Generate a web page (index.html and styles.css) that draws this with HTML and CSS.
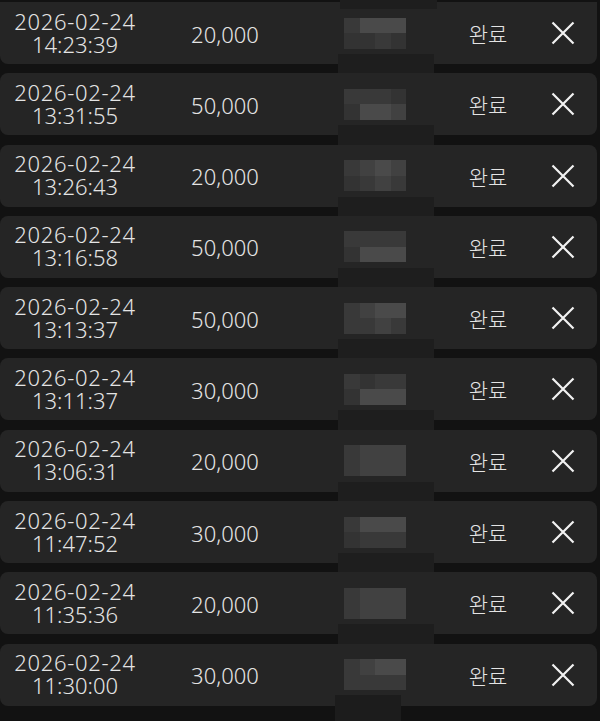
FILE: index.html
```html
<!DOCTYPE html>
<html lang="ko">
<head>
<meta charset="utf-8">
<link rel="stylesheet" href="styles.css">
</head>
<body>
<div class="list">
  <div class="row first">
    <div class="date"><span class="d">2026-02-24</span><span>14:23:39</span></div>
    <div class="amount">20,000</div>
    <div class="blur"><div class="mosaic"><i class="c2"></i><i class="c4"></i><i class="c4"></i><i class="c4"></i><i class="c1"></i><i class="c1"></i><i class="c2"></i><i class="c1"></i></div></div>
    <div class="status">완료</div>
    <div class="close"><svg viewBox="0 0 24 24" width="24" height="24"><path d="M1.5 1.5 L22.5 22.5 M22.5 1.5 L1.5 22.5"/></svg></div>
  </div>
  <div class="row">
    <div class="date"><span class="d">2026-02-24</span><span>13:31:55</span></div>
    <div class="amount">50,000</div>
    <div class="blur"><div class="mosaic"><i class="c2"></i><i class="c2"></i><i class="c2"></i><i class="c1"></i><i class="c1"></i><i class="c4"></i><i class="c4"></i><i class="c3"></i></div></div>
    <div class="status">완료</div>
    <div class="close"><svg viewBox="0 0 24 24" width="24" height="24"><path d="M1.5 1.5 L22.5 22.5 M22.5 1.5 L1.5 22.5"/></svg></div>
  </div>
  <div class="row">
    <div class="date"><span class="d">2026-02-24</span><span>13:26:43</span></div>
    <div class="amount">20,000</div>
    <div class="blur"><div class="mosaic"><i class="c2"></i><i class="c3"></i><i class="c4"></i><i class="c3"></i><i class="c1"></i><i class="c2"></i><i class="c3"></i><i class="c2"></i></div></div>
    <div class="status">완료</div>
    <div class="close"><svg viewBox="0 0 24 24" width="24" height="24"><path d="M1.5 1.5 L22.5 22.5 M22.5 1.5 L1.5 22.5"/></svg></div>
  </div>
  <div class="row">
    <div class="date"><span class="d">2026-02-24</span><span>13:16:58</span></div>
    <div class="amount">50,000</div>
    <div class="blur"><div class="mosaic"><i class="c2"></i><i class="c2"></i><i class="c2"></i><i class="c2"></i><i class="c1"></i><i class="c4"></i><i class="c4"></i><i class="c4"></i></div></div>
    <div class="status">완료</div>
    <div class="close"><svg viewBox="0 0 24 24" width="24" height="24"><path d="M1.5 1.5 L22.5 22.5 M22.5 1.5 L1.5 22.5"/></svg></div>
  </div>
  <div class="row">
    <div class="date"><span class="d">2026-02-24</span><span>13:13:37</span></div>
    <div class="amount">50,000</div>
    <div class="blur"><div class="mosaic"><i class="c2"></i><i class="c3"></i><i class="c4"></i><i class="c4"></i><i class="c2"></i><i class="c2"></i><i class="c3"></i><i class="c2"></i></div></div>
    <div class="status">완료</div>
    <div class="close"><svg viewBox="0 0 24 24" width="24" height="24"><path d="M1.5 1.5 L22.5 22.5 M22.5 1.5 L1.5 22.5"/></svg></div>
  </div>
  <div class="row">
    <div class="date"><span class="d">2026-02-24</span><span>13:11:37</span></div>
    <div class="amount">30,000</div>
    <div class="blur"><div class="mosaic"><i class="c2"></i><i class="c1"></i><i class="c2"></i><i class="c2"></i><i class="c1"></i><i class="c4"></i><i class="c4"></i><i class="c4"></i></div></div>
    <div class="status">완료</div>
    <div class="close"><svg viewBox="0 0 24 24" width="24" height="24"><path d="M1.5 1.5 L22.5 22.5 M22.5 1.5 L1.5 22.5"/></svg></div>
  </div>
  <div class="row">
    <div class="date"><span class="d">2026-02-24</span><span>13:06:31</span></div>
    <div class="amount">20,000</div>
    <div class="blur"><div class="mosaic"><i class="c2"></i><i class="c3"></i><i class="c3"></i><i class="c3"></i><i class="c2"></i><i class="c3"></i><i class="c3"></i><i class="c3"></i></div></div>
    <div class="status">완료</div>
    <div class="close"><svg viewBox="0 0 24 24" width="24" height="24"><path d="M1.5 1.5 L22.5 22.5 M22.5 1.5 L1.5 22.5"/></svg></div>
  </div>
  <div class="row">
    <div class="date"><span class="d">2026-02-24</span><span>11:47:52</span></div>
    <div class="amount">30,000</div>
    <div class="blur"><div class="mosaic"><i class="c2"></i><i class="c4"></i><i class="c4"></i><i class="c4"></i><i class="c1"></i><i class="c2"></i><i class="c2"></i><i class="c2"></i></div></div>
    <div class="status">완료</div>
    <div class="close"><svg viewBox="0 0 24 24" width="24" height="24"><path d="M1.5 1.5 L22.5 22.5 M22.5 1.5 L1.5 22.5"/></svg></div>
  </div>
  <div class="row">
    <div class="date"><span class="d">2026-02-24</span><span>11:35:36</span></div>
    <div class="amount">20,000</div>
    <div class="blur"><div class="mosaic"><i class="c2"></i><i class="c3"></i><i class="c3"></i><i class="c3"></i><i class="c2"></i><i class="c3"></i><i class="c3"></i><i class="c3"></i></div></div>
    <div class="status">완료</div>
    <div class="close"><svg viewBox="0 0 24 24" width="24" height="24"><path d="M1.5 1.5 L22.5 22.5 M22.5 1.5 L1.5 22.5"/></svg></div>
  </div>
  <div class="row last">
    <div class="date"><span class="d">2026-02-24</span><span>11:30:00</span></div>
    <div class="amount">30,000</div>
    <div class="blur"><div class="mosaic"><i class="c2"></i><i class="c3"></i><i class="c4"></i><i class="c4"></i><i class="c2"></i><i class="c2"></i><i class="c2"></i><i class="c2"></i></div></div>
    <div class="status">완료</div>
    <div class="close"><svg viewBox="0 0 24 24" width="24" height="24"><path d="M1.5 1.5 L22.5 22.5 M22.5 1.5 L1.5 22.5"/></svg></div>
  </div>
</div>
</body>
</html>
```

FILE: styles.css
```css
html, body {
  margin: 0;
  padding: 0;
  background: #121212;
  width: 600px;
  height: 721px;
  overflow: hidden;
}

body {
  font-family: "Noto Sans", "Noto Sans CJK KR", sans-serif;
  font-weight: 300;
  color: #e4e4e4;
}

.list {
  display: flex;
  flex-direction: column;
  gap: 9.3px;
  padding-top: 2px;
  width: 597px;
}

.row {
  position: relative;
  height: 62px;
  background: #252525;
  border-radius: 8px;
  display: grid;
  grid-template-columns: 150px 150px 150px 75px 72px;
  align-items: center;
}

.row.first {
  border-top-left-radius: 0;
  border-top-right-radius: 0;
}

.date {
  display: flex;
  flex-direction: column;
  align-items: center;
  font-size: 22px;
  line-height: 23px;
  margin-top: -1px;
}

.date .d {
  letter-spacing: 0.7px;
}

.amount {
  text-align: center;
  font-size: 22px;
  line-height: 22px;
  margin-top: 1px;
}

.blur {
  position: relative;
  height: 100%;
  display: flex;
  align-items: center;
}

.mosaic {
  margin-left: 44px;
  width: 62px;
  height: 31px;
  display: grid;
  grid-template-columns: repeat(4, 1fr);
  grid-template-rows: repeat(2, 1fr);
  position: relative;
  z-index: 1;
}

.mosaic i { display: block; }
.c1 { background: #333333; }
.c2 { background: #393939; }
.c3 { background: #414141; }
.c4 { background: #4a4a4a; }

.blur::after {
  content: "";
  position: absolute;
  left: 38px;
  width: 96px;
  bottom: -19px;
  height: 29px;
  background: #1e1e1e;
}

.row.first .blur::before {
  content: "";
  position: absolute;
  left: 40px;
  width: 97px;
  top: -2px;
  height: 9px;
  background: #1e1e1e;
}

.row.last .blur::after {
  left: 35px;
  width: 66px;
  bottom: -15px;
  height: 26px;
  background: #1c1c1c;
}

.status {
  font-family: "Noto Sans CJK KR", sans-serif;
  text-align: center;
  font-size: 21px;
  line-height: 22px;
  margin-left: 1px;
}

.close {
  display: flex;
  justify-content: center;
  padding-left: 4px;
}

.close svg {
  display: block;
  fill: none;
  stroke: #f2f2f2;
  stroke-width: 2.2;
}
```
